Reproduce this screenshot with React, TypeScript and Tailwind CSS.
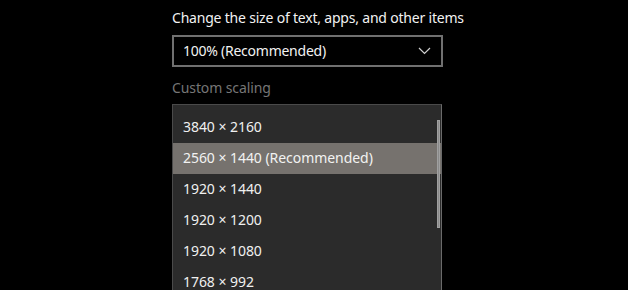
import React from "react";

const rows = [
  "3840 × 2160",
  "2560 × 1440 (Recommended)",
  "1920 × 1440",
  "1920 × 1200",
  "1920 × 1080",
  "1768 × 992",
];

export default function App() {
  return (
    <div
      className="w-[628px] h-[290px] bg-black overflow-hidden pl-[172px] text-[14px] text-white"
      style={{ fontFamily: '"Noto Sans", "Open Sans", sans-serif' }}
    >
      <div className="pt-[7px] h-[35px] leading-[22px] tracking-[-0.2px] text-[#f2f2f2]">
        Change the size of text, apps, and other items
      </div>
      <div className="w-[271px] h-[32px] border-2 border-[#707070] flex items-center justify-between pl-[9px] pr-[9px]">
        <span className="leading-[20px] tracking-[-0.25px] text-[#f2f2f2]">100% (Recommended)</span>
        <svg width="13" height="8" viewBox="0 0 13 8" className="mr-[1px]">
          <path d="M1 1 L6.5 6.5 L12 1" fill="none" stroke="#cfcfcf" strokeWidth="1.2" />
        </svg>
      </div>
      <div className="h-[37px] pt-[10px] leading-[22px] tracking-[-0.1px] text-[#767676]">Custom scaling</div>
      <div className="relative w-[270px] h-[190px] bg-[#2b2b2b] border border-[#4a4a4a] border-r-[#6a6a6a] pt-[7px] overflow-hidden">
        {rows.map((r, i) => (
          <div
            key={r}
            className={
              "h-[31px] flex items-center pl-[10px] pb-[1px] leading-[20px] tracking-[-0.05px] " +
              (i === 1 ? "bg-[#76726e] text-[#f2f2f2]" : "text-[#f0f0f0]")
            }
          >
            {r}
          </div>
        ))}
        <div className="absolute left-[264px] top-[15px] w-[3px] h-[108px] bg-[#8a8a8a] border-[0.5px] border-[#a0a0a0]" />
      </div>
    </div>
  );
}
